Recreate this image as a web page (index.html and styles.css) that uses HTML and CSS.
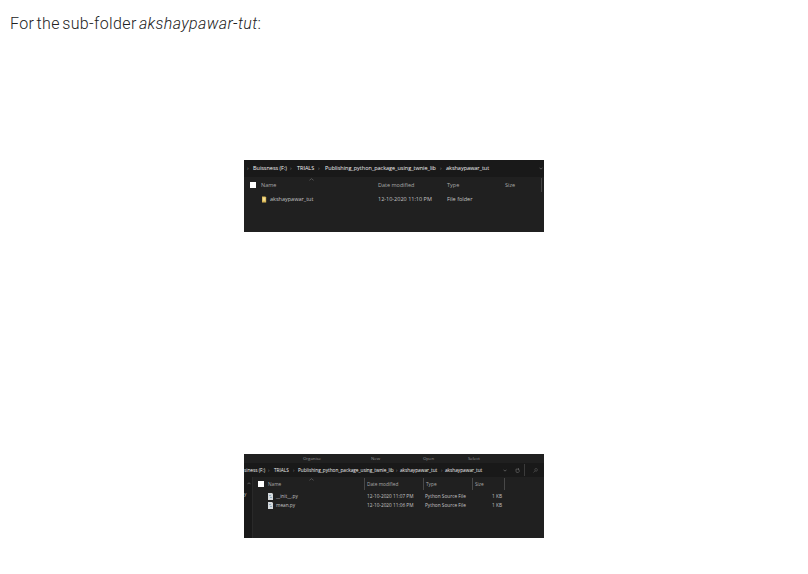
FILE: index.html
```
<!DOCTYPE html>
<html lang="en">
<head>
<meta charset="utf-8">
<title>Sub-folder structure</title>
<link rel="stylesheet" href="styles.css">
</head>
<body>
<p class="intro">For the sub-folder <em>akshaypawar-tut</em>:</p>

<section class="explorer explorer-parent">
  <div class="path">
    <i class="sep">›</i><span>Buissness (F:)</span><i class="sep">›</i><span>TRIALS</span><i class="sep">›</i><span class="project">Publishing_python_package_using_twnie_lib</span><i class="sep">›</i><span>akshaypawar_tut</span>
    <svg class="down" viewBox="0 0 4 3"><path d="M.5 .7 2 2.2 3.5 .7"/></svg>
  </div>
  <div class="row head">
    <b class="check"></b><span class="name">Name <svg class="sort" viewBox="0 0 6 3"><path d="M.5 2.5 3 .5 5.5 2.5"/></svg></span><span>Date modified</span><span>Type</span><span>Size</span>
  </div>
  <div class="row">
    <svg class="icon" viewBox="0 0 6 7"><path fill="#d9b857" d="M0 0h4l1 1v6H0z"/><path fill="#f3dc91" d="M1 1h3v4H1z"/></svg><span class="name">akshaypawar_tut</span><span>12-10-2020 11:10 PM</span><span>File folder</span>
  </div>
</section>

<section class="explorer explorer-child">
  <div class="tools"><span>Organise</span><span>New</span><span>Open</span><span>Select</span></div>
  <div class="path">
    <span>siness (F:)</span><i class="sep">›</i><span>TRIALS</span><i class="sep">›</i><span class="project">Publishing_python_package_using_twnie_lib</span><i class="sep">›</i><span>akshaypawar_tut</span><i class="sep">›</i><span>akshaypawar_tut</span>
    <svg class="down" viewBox="0 0 4 3"><path d="M.5 .7 2 2.2 3.5 .7"/></svg>
    <svg class="refresh" viewBox="0 0 6 6"><path d="M4.8 1.3H1.2v3.2l1 .8h1.9l.9-1V2M3.7.3l1.1 1-1.1 1"/></svg>
    <div class="search"><svg viewBox="0 0 6 6"><circle cx="3.7" cy="2.2" r="1.6"/><path d="M2.5 3.4.5 5.5"/></svg></div>
  </div>
  <div class="body">
    <aside><svg viewBox="0 0 4 3"><path d="M.5 2.2 2 .7 3.5 2.2"/></svg><span>y</span></aside>
    <div class="files">
      <div class="row head">
        <b class="check"></b><span class="name">Name <svg class="sort" viewBox="0 0 6 3"><path d="M.5 2.5 3 .5 5.5 2.5"/></svg></span><span>Date modified</span><span>Type</span><span>Size</span>
      </div>
      <div class="row">
        <svg class="icon" viewBox="0 0 5 7"><path fill="#d5d9dc" d="M0 0h4l1 1v6H0z"/><path fill="#8eabc0" d="M1 2h2v1H1zM2 4h2v1H2z"/></svg><span class="name">__init__.py</span><span>12-10-2020 11:07 PM</span><span>Python Source File</span><span class="size">1 KB</span>
      </div>
      <div class="row">
        <svg class="icon" viewBox="0 0 5 7"><path fill="#d5d9dc" d="M0 0h4l1 1v6H0z"/><path fill="#8eabc0" d="M1 2h2v1H1zM2 4h2v1H2z"/></svg><span class="name">mean.py</span><span>12-10-2020 11:06 PM</span><span>Python Source File</span><span class="size">1 KB</span>
      </div>
    </div>
  </div>
</section>
</body>
</html>
```
FILE: styles.css
```
* { box-sizing: border-box; }
body {
  margin: 0;
  height: 574px;
  overflow: hidden;
  background: #fff;
}
.intro {
  margin: 0;
  height: 160px;
  padding: 12px 0 0 10px;
  font: 300 16px/24px Roboto, sans-serif;
  letter-spacing: .37px;
  word-spacing: -2px;
  color: #222;
  white-space: nowrap;
}
.explorer {
  width: 300px;
  margin-left: 244px;
  overflow: hidden;
  background: #202020;
  color: #c4c4c4;
  font-family: "Open Sans", sans-serif;
  white-space: nowrap;
}
.explorer svg { fill: none; stroke: #858585; stroke-width: .6; display: block; }
.explorer .icon { stroke: none; }
.path { display: grid; align-items: center; background: #191919; color: #f0f0f0; }
.sep { font-style: normal; color: #8c8c8c; }
.row { display: grid; align-items: center; }
.head { color: #a8a8a8; }
.check { width: 6px; height: 6px; background: #fff; }
.name { display: flex; }
.icon { width: 5px; height: 7px; }
.down { width: 4px; height: 3px; }
.sort { width: 5px; height: 3px; }

.explorer-parent { height: 72px; font-size: 5.5px; line-height: 8px; }
.explorer-parent .path {
  height: 17px;
  padding: 0 0 1px 3px;
  grid-template-columns: 6px 37px 7px 21px 7px 115px 6px 93px 5px;
}
.explorer-parent .path span { letter-spacing: -.02px; }
.explorer-parent .row {
  height: 12px;
  padding-left: 18px;
  grid-template-columns: 8px 108px 69px 58px 1fr;
}
.explorer-parent .head {
  height: 16px;
  padding-left: 6px;
  grid-template-columns: 11px 117px 69px 58px 37px;
}
.explorer-parent .head > :last-child { border-right: 1px solid #444; line-height: 14px; }
.explorer-parent .sort { margin: -3px 0 0 33px; }

.explorer-child { height: 84px; margin-top: 222px; font-size: 4.75px; line-height: 7px; }
.tools {
  display: grid;
  grid-template-columns: 68px 52px 45px 1fr;
  align-items: center;
  height: 9px;
  padding: 0 0 1px 59px;
  font-size: 4.3px;
  color: #929292;
}
.explorer-child .path {
  height: 14px;
  grid-template-columns: 24px 6px 19px 5px 98px 4px 41px 4px 58px 12px 9px 20px;
}
.explorer-child .path span { letter-spacing: -.02px; }
.refresh { width: 5px; height: 5px; }
.search { height: 12px; padding: 4px 0 0 8px; border-left: 1px solid #3b3b3b; }
.search svg { width: 5px; height: 5px; stroke: #666; }
.body { display: flex; height: 61px; }
aside { width: 9px; border-right: 1px solid #292929; background: #191919; }
aside svg { width: 4px; height: 3px; margin: 5px 0 0 3px; }
aside span { display: block; margin-top: 6px; line-height: 6px; }
.files { width: 291px; }
.explorer-child .row {
  height: 9px;
  padding-left: 15px;
  grid-template-columns: 8px 91px 58px 49px 28px;
}
.explorer-child .head {
  height: 14px;
  margin-bottom: 1px;
  padding-left: 5px;
  grid-template-columns: 10px 96px 59px 49px 33px;
}
.explorer-child .head > span:not(.name) { border-left: 1px solid #484848; padding-left: 2px; line-height: 12px; }
.explorer-child .head > :last-child { border-right: 1px solid #484848; }
.explorer-child .sort { margin: -3px 0 0 28px; }
.explorer .size { text-align: right; }
```
